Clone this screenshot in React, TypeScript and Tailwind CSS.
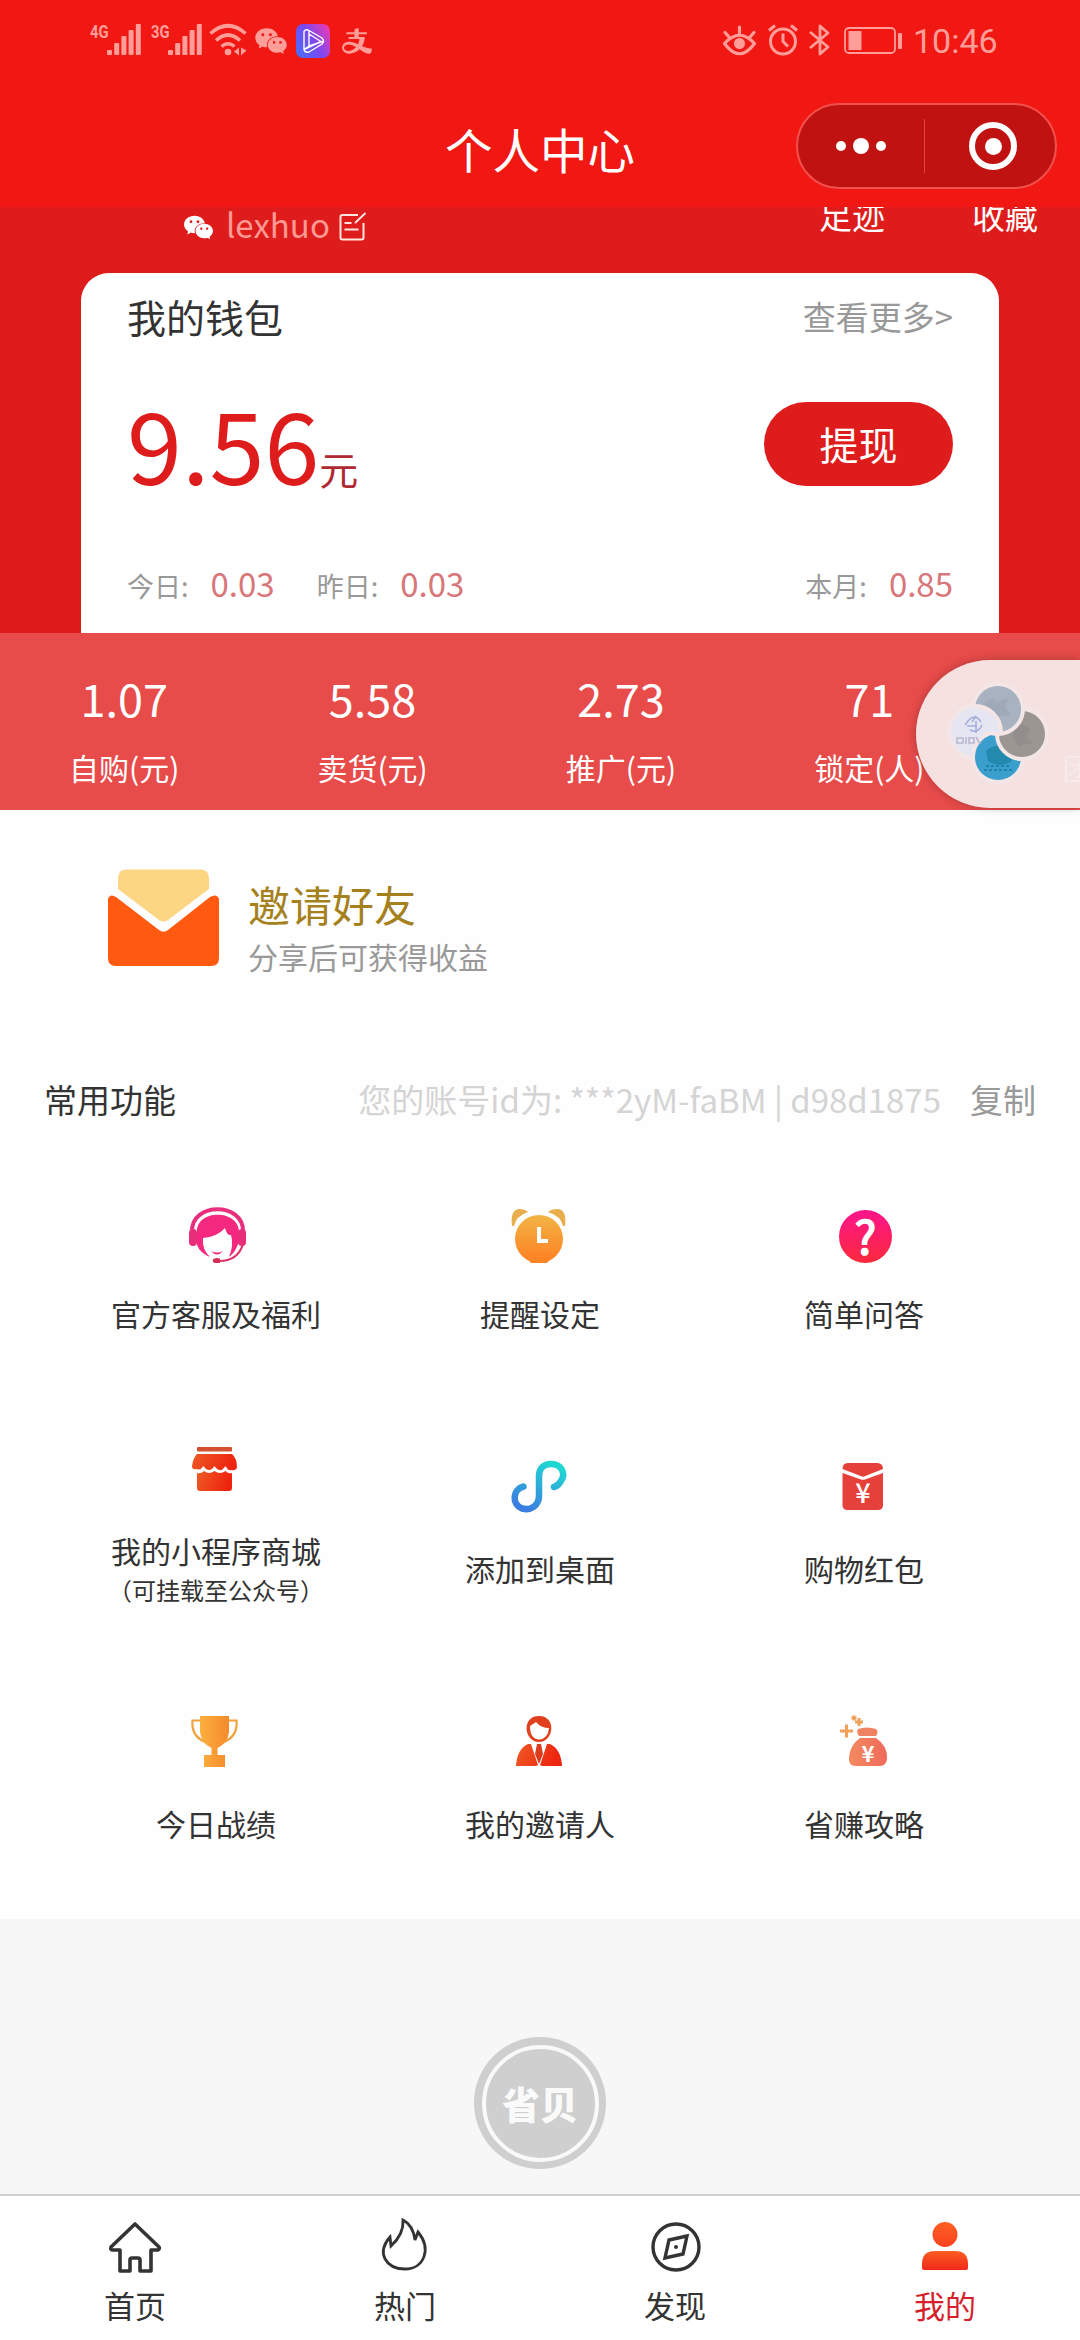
import type { ReactNode } from 'react';
import { AiFillWechat, AiOutlineAlipay } from 'react-icons/ai';

const estadisticas = [
  { valor: '1.07', etiqueta: '自购(元)' },
  { valor: '5.58', etiqueta: '卖货(元)' },
  { valor: '2.73', etiqueta: '推广(元)' },
  { valor: '71', etiqueta: '锁定(人)' },
  { valor: '', etiqueta: '团队(人)' },
];

function Signal({ label }: { label: string }) {
  return (
    <div className="flex h-[34px] w-[52px] items-start">
      <span className="w-[17px] origin-left scale-x-[0.82] font-[Roboto] text-[18px] font-bold leading-[18px]">{label}</span>
      <svg width="34" height="34" viewBox="0 0 34 34" fill="currentColor" className="shrink-0">
        <rect x="0" y="27" width="5" height="5" rx="1" />
        <rect x="7.2" y="20" width="5" height="12" rx="1" />
        <rect x="14.4" y="13" width="5" height="19" rx="1" />
        <rect x="21.6" y="7" width="5" height="25" rx="1" />
        <rect x="28.8" y="1" width="5" height="31" rx="1" />
      </svg>
    </div>
  );
}

function StatusBar() {
  return (
    <div className="flex h-[80px] items-start pl-[90px] pr-[84px] pt-[23px] text-[#ff9e99]">
      <Signal label="4G" />
      <div className="w-[9px]" />
      <Signal label="3G" />
      <svg width="38" height="34" viewBox="0 0 38 34" fill="none" stroke="currentColor" strokeWidth="3.6" className="ml-[6px]">
        <path d="M1.5 10.5Q19-5 36.5 10.5" />
        <path d="M7 17.5Q19 6.5 31 17.5" />
        <path d="M12.5 23.5Q19 18 25.5 23.5" />
        <circle cx="19" cy="29" r="3.3" fill="currentColor" stroke="none" />
        <path d="M30 24.5v8l-5-4zM32 24.5v8l5.5-5z" fill="currentColor" stroke="none" />
      </svg>
      <AiFillWechat className="ml-[6px] h-[36px] w-[36px]" />
      <svg width="34" height="34" viewBox="0 0 34 34" className="ml-[7px] mt-[1px]">
        <defs>
          <linearGradient id="video" x1="0" y1="0.8" x2="1" y2="0.2">
            <stop offset="0" stopColor="#4a6cff" />
            <stop offset="0.5" stopColor="#7a48f0" />
            <stop offset="1" stopColor="#e83bb4" />
          </linearGradient>
        </defs>
        <rect width="34" height="34" rx="7" fill="url(#video)" />
        <path d="M8 7.5Q10 4.5 13 6.5L26 14Q29 17 26 20L13 28Q9 29 8 25.5zM8 25.5L13 22V6.5M13 10L25 17.5L8 25.5M13 22L28 17" fill="none" stroke="#fff" strokeWidth="1.4" strokeLinejoin="round" />
      </svg>
      <AiOutlineAlipay className="ml-[9px] mt-[1px] h-[34px] w-[36px]" />

      <div className="ml-auto flex items-start">
        <svg width="35" height="34" viewBox="0 0 35 34" fill="none" stroke="currentColor" strokeWidth="3.2" strokeLinecap="round">
          <path d="M2.5 20.5Q17.5 4 32.5 20.5Q17.5 41 2.5 20.5z" strokeLinejoin="round" />
          <circle cx="17.5" cy="20.5" r="5.5" fill="currentColor" stroke="none" />
          <path d="M3 9.5L7 14M17.5 4v6M32 9.5L28 14" />
        </svg>
        <svg width="32" height="34" viewBox="0 0 32 34" fill="none" stroke="currentColor" strokeWidth="3" className="ml-[10px]">
          <circle cx="16" cy="18.5" r="12.5" />
          <path d="M16 10.5v8l5 5M2 7.5l6-5M24 2.5l6 5" />
        </svg>
        <svg width="24" height="34" viewBox="0 0 24 34" fill="none" stroke="currentColor" strokeWidth="2.8" className="ml-[9px]">
          <path d="M2 9l18 15-8 7V3l8 7L2 25" strokeLinejoin="round" />
        </svg>
        <svg width="60" height="34" viewBox="0 0 60 34" className="ml-[12px]">
          <rect x="1" y="5" width="50" height="25" rx="4" fill="none" stroke="currentColor" strokeWidth="1.8" />
          <rect x="4.5" y="8" width="13" height="19" fill="currentColor" />
          <rect x="54" y="10" width="4" height="16" rx="1" fill="currentColor" />
        </svg>
        <span className="ml-[9px] w-[83px] whitespace-nowrap font-[Roboto] text-[34px] leading-[36px]">10:46</span>
      </div>
    </div>
  );
}

function Header() {
  return (
    <header className="relative h-[207px] shrink-0 bg-[#f11814]">
      <StatusBar />
      <h1 className="pt-[34px] text-center text-[47.5px] leading-[70px] text-white">个人中心</h1>
      {/* Cápsula del mini programa */}
      <div className="absolute left-[796px] top-[103px] flex h-[86px] w-[261px] items-center rounded-full border-2 border-[#f2504c] bg-[#c01311]">
        <div className="flex w-[126px] items-center justify-center gap-[7px]">
          <span className="h-[10px] w-[10px] rounded-full bg-white" />
          <span className="h-[16px] w-[16px] rounded-full bg-white" />
          <span className="h-[10px] w-[10px] rounded-full bg-white" />
        </div>
        <div className="h-[54px] w-px bg-[#e0443f]" />
        <div className="ml-[44px] flex h-[48px] w-[48px] items-center justify-center rounded-full border-[6px] border-white">
          <span className="h-[17px] w-[17px] rounded-full bg-white" />
        </div>
      </div>
    </header>
  );
}

function Wallet() {
  return (
    <section className="h-[426px] shrink-0 overflow-hidden bg-[#df1c1c] px-[81px]">
      <div className="-mr-[60px] flex h-[66px] items-start text-white">
        <AiFillWechat className="ml-[101px] mt-[4px] h-[33px] w-[33px] shrink-0" />
        <span className="ml-[11px] mt-[-7px] text-[33px] leading-[48px] text-[#ff9993]">lexhuo</span>
        <svg width="28" height="30" viewBox="0 0 28 30" fill="none" stroke="#ffe3e0" strokeWidth="2" className="ml-[9px] mt-[5px] shrink-0">
          <path d="M19 3H3.5Q1.5 3 1.5 5v20.5Q1.5 27.5 3.5 27.5h19Q24.5 27.5 24.5 25.5V11M16 11L26.5 1M5.5 11h7M5.5 17.5h14" />
        </svg>
        <div className="ml-auto mr-[21px] mt-[-16px] flex gap-[87px] text-[33px] leading-[48px]">
          <span className="whitespace-nowrap">足迹</span>
          <span className="whitespace-nowrap">收藏</span>
        </div>
      </div>
      <div className="h-[360px] rounded-t-[28px] bg-white px-[46px]">
        <div className="flex items-center justify-between pt-[14px]">
          <span className="text-[39px] leading-[58px] text-[#333]">我的钱包</span>
          <span className="text-[33px] leading-[58px] text-[#999]">查看更多&gt;</span>
        </div>
        <div className="mt-[22px] flex h-[130px] items-center justify-between">
          <div className="flex items-baseline pt-[20px] text-[#df1c1c]">
            <span className="text-[99px] leading-[130px]">9.56</span>
            <span className="text-[39px] text-[#b02a33]">元</span>
          </div>
          <button className="mt-[23px] h-[84px] w-[189px] rounded-full bg-[#df1c1c] text-[39px] leading-[81px] text-white">提现</button>
        </div>
        <div className="flex items-baseline pt-[61px] text-[27px] leading-[50px] text-[#999]">
          <span>今日:</span>
          <span className="ml-[22px] text-[33px] text-[#d8777a]">0.03</span>
          <span className="ml-[42px]">昨日:</span>
          <span className="ml-[22px] text-[33px] text-[#d8777a]">0.03</span>
          <span className="ml-auto">本月:</span>
          <span className="ml-[22px] text-[33px] text-[#d8777a]">0.85</span>
        </div>
      </div>
    </section>
  );
}

function Stats() {
  return (
    <section className="relative h-[177px] shrink-0 bg-[#e74b4a]">
      <div className="flex overflow-hidden pt-[33px] text-white">
        {estadisticas.map((item) => (
          <div key={item.etiqueta} className="w-[248.4px] shrink-0 text-center">
            <div className="h-[64px] text-[45px] leading-[64px]">{item.valor}</div>
            <div className="mt-[15px] text-[30px] leading-[44px]">{item.etiqueta}</div>
          </div>
        ))}
      </div>
      {/* Ventana flotante */}
      <div className="absolute right-0 top-[27px] h-[148px] w-[164px] rounded-l-full bg-[#f4e9e8]/95 shadow-[0_0_8px_rgba(0,0,0,0.25)]">
        <svg width="164" height="148" viewBox="0 0 164 148" stroke="#f4e6e6" strokeWidth="4">
          <defs>
            <clipPath id="upper">
              <rect x="30" y="30" width="70" height="42" />
            </clipPath>
          </defs>
          <circle cx="59" cy="72" r="26" fill="#e6e6f3" />
          <circle cx="82" cy="97" r="25" fill="#3b9fce" />
          <path d="M70 91q10-10 22 0l4 10q-12 8-24 0z" fill="#2389ad" stroke="none" />
          <circle cx="106" cy="74" r="25" fill="#9c9693" />
          <path d="M97 68l8-4 9 4-3 10 6 5-14 3-6-8z" fill="#938e8b" stroke="none" />
          <circle cx="82" cy="49" r="25" fill="#a9b2c0" />
          <path d="M68 43l9-5 4 4 12-4-4 9 6 8-13 1-4 9-8-9z" fill="#a0a9b8" stroke="none" />
          <circle cx="59" cy="72" r="26" fill="#e6e6f3" clipPath="url(#upper)" />
          <g fill="none" stroke="#a3aedb" strokeWidth="1.6">
            <path d="M49 65q9-14 16-3M51 66h10M54 70q8 4 12-5M60 61v12M56 62l4-6" />
            <path d="M41 78h6v5h-6zM50 77v7M53 78h5v5h-5zM60 77l4 7" stroke="#bbb8cf" />
          </g>
          <path d="M68 110h28M70 106h25" stroke="#2380ac" strokeWidth="1.8" strokeDasharray="3 2" />
        </svg>
      </div>
    </section>
  );
}

function Invite() {
  return (
    <section className="flex shrink-0 pl-[107px] pt-[58px]">
      <svg width="113" height="99" viewBox="0 0 113 99">
        <path d="M11 10Q11 1.5 20 1.5H93Q102 1.5 102 10V21L61 52Q56.5 55 52 52L11 21z" fill="#fdd683" />
        <path d="M1 31Q3 25 9 29L52 62Q56.5 65.5 61 62L103 29Q110 25 112 31V90Q112 98 104 98H9Q1 98 1 90z" fill="#ff5a10" />
      </svg>
      <div className="pl-[28px] pt-[7px]">
        <h2 className="text-[42px] leading-[58px] text-[#a5811e]">邀请好友</h2>
        <p className="text-[30px] leading-[46px] text-[#999]">分享后可获得收益</p>
      </div>
    </section>
  );
}

function Icon({ children }: { children: ReactNode }) {
  return (
    <svg width="60" height="60" viewBox="0 0 60 60" className="overflow-visible">
      {children}
    </svg>
  );
}

const funciones = [
  {
    nombre: '官方客服及福利',
    icono: (
      <Icon>
        <path d="M6 30C6 1 57 1 57 30" fill="none" stroke="#e82e7c" strokeWidth="4" />
        <path d="M11 31C10 8 53 8 53 31L53 40Q50 51 43 56Q48 44 45 34Q41 35 39 27Q31 36 17 37Q16 49 24 56Q14 52 11 44z" fill="#f4287e" />
        <rect x="3" y="28" width="8" height="17" rx="4" fill="#e92e79" />
        <rect x="52" y="28" width="8" height="17" rx="4" fill="#e92e79" />
        <path d="M25 50Q31 53 37 50Q31 57 25 50z" fill="#f4287e" />
        <path d="M57 43Q52 60 33 60" fill="none" stroke="#e0326a" strokeWidth="2.2" />
        <path d="M27 58.5Q29 56 34 57.5V62H29Q26 61 27 58.5z" fill="#d92c55" />
      </Icon>
    ),
  },
  {
    nombre: '提醒设定',
    icono: (
      <Icon>
        <path d="M2 25Q0 9 9 8Q15 8 18 11Q6 15 4 25zM55 25Q57 9 48 8Q41 8 38 11Q51 15 53 25z" fill="#e8ae4b" />
        <circle cx="29" cy="38" r="24" fill="url(#naranja)" />
        <path d="M18 58h22l-3 4H21z" fill="#ff8426" />
        <path d="M29 26v14h9" fill="none" stroke="#fff" strokeWidth="4" />
      </Icon>
    ),
  },
  {
    nombre: '简单问答',
    icono: (
      <Icon>
        <circle cx="31.5" cy="35.5" r="26.5" fill="url(#rosa)" />
        <text x="31.5" y="53" textAnchor="middle" fontSize="46" fontWeight="400" fill="#fff" stroke="#fff" strokeWidth="1.6" fontFamily="Noto Sans CJK SC, sans-serif">?</text>
      </Icon>
    ),
  },
  {
    nombre: '我的小程序商城',
    nota: '（可挂载至公众号）',
    icono: (
      <Icon>
        <rect x="11" y="9" width="35" height="4.5" rx="1" fill="#d4512f" />
        <path d="M11 16H46Q51 20 51 30Q49 33 45 32Q42 33 39.5 28Q36 33 34 32Q31 32 28.5 28Q26 32 23 32Q20 32 17.5 28Q14 33 11 31Q6 32 6 28Q7 20 11 16z" fill="url(#tienda)" />
        <path d="M11 35Q15 36 18 33Q23 37 28.5 33Q34 37 39.5 33Q42 36 46 35V50Q46 53 43 53H14Q11 53 11 50z" fill="url(#tienda)" />
      </Icon>
    ),
  },
  {
    nombre: '添加到桌面',
    icono: (
      <Icon>
        <path d="M13.5 30.5C3 33 1 48 12 52.5C21 55 29 49 29 40V20C29 12 34 8 41 8C52 8 56 18 51 25Q48 30 44 31" fill="none" stroke="url(#enlace)" strokeWidth="6.5" strokeLinecap="round" />
      </Icon>
    ),
  },
  {
    nombre: '购物红包',
    icono: (
      <Icon>
        <path d="M8.5 13Q8.5 7 14 7H43Q49 7 49 13L30 20.5Q29 21 28 20.5z" fill="#e5403a" />
        <path d="M8.5 17L27 23.5Q29 24 31 23.5L49 17V49Q49 54 44 54H13.5Q8.5 54 8.5 49z" fill="#e5403a" />
        <text x="29" y="47" textAnchor="middle" fontSize="27" fontWeight="500" fill="#fff" fontFamily="Noto Sans CJK SC, sans-serif">¥</text>
      </Icon>
    ),
  },
  {
    nombre: '今日战绩',
    icono: (
      <Icon>
        <path d="M15 9.5H6.5Q5 25 19 31M42 9.5H50.5Q52 25 38 31" fill="none" stroke="#f0a33c" strokeWidth="2.2" />
        <path d="M14 5H43V21Q42 32 31.5 37V44H39V56H18V44H25.5V37Q15 32 14 21z" fill="url(#copa)" />
      </Icon>
    ),
  },
  {
    nombre: '我的邀请人',
    icono: (
      <Icon>
        <path fillRule="evenodd" d="M29 5C11 5 14 31 29 31S47 5 29 5zM20 15L26 11Q31 17 39 17Q38 28 29 28.5Q20 28 20 15z" fill="#e0401e" />
        <path d="M6 55Q7 38 18 33H21L28 54L26 55zM52 55Q51 38 40 33H37L30 54L32 55z" fill="url(#tienda)" />
        <path d="M27 33h4l2 10-4 10-4-10z" fill="#d93d1e" />
      </Icon>
    ),
  },
  {
    nombre: '省赚攻略',
    icono: (
      <Icon>
        <path d="M6 20h13M12.5 13.5v13M21 11h8M25 7v8M17.5 7h5M20 4.5v5" stroke="#f0a05a" strokeWidth="3" />
        <path d="M24 18Q33 15 42 18Q45 20 42 25H25Q22 21 24 18z" fill="#ef8262" />
        <path d="M26 27H42Q54 35 53 48Q52 55 46 55H22Q14 55 15 46Q16 34 26 27z" fill="url(#bolsa)" />
        <text x="34" y="50.5" textAnchor="middle" fontSize="22" fontWeight="700" fill="#fff" fontFamily="Noto Sans CJK SC, sans-serif">¥</text>
      </Icon>
    ),
  },
];

function Gradients() {
  return (
    <svg width="0" height="0" className="absolute">
      <defs>
        <linearGradient id="naranja" x1="0" y1="0" x2="0" y2="1">
          <stop offset="0" stopColor="#f2b445" />
          <stop offset="1" stopColor="#ff7f22" />
        </linearGradient>
        <linearGradient id="rosa" x1="0" y1="0" x2="0" y2="1">
          <stop offset="0" stopColor="#fc148c" />
          <stop offset="1" stopColor="#fb2a3c" />
        </linearGradient>
        <linearGradient id="tienda" x1="0" y1="0" x2="1" y2="0.2">
          <stop offset="0" stopColor="#ee5a24" />
          <stop offset="1" stopColor="#ee2410" />
        </linearGradient>
        <linearGradient id="enlace" x1="0.8" y1="0" x2="0.3" y2="1">
          <stop offset="0" stopColor="#20d8d2" />
          <stop offset="1" stopColor="#3a7fe0" />
        </linearGradient>
        <linearGradient id="copa" x1="0" y1="0" x2="1" y2="0">
          <stop offset="0" stopColor="#fbaf3e" />
          <stop offset="1" stopColor="#f58a2c" />
        </linearGradient>
        <linearGradient id="bolsa" x1="0" y1="0" x2="1" y2="0">
          <stop offset="0" stopColor="#f38a5e" />
          <stop offset="1" stopColor="#f0695c" />
        </linearGradient>
        <linearGradient id="persona" gradientUnits="userSpaceOnUse" x1="0" y1="0" x2="0" y2="52">
          <stop offset="0" stopColor="#ff6324" />
          <stop offset="0.5" stopColor="#f8431f" />
          <stop offset="0.6" stopColor="#fb5c22" />
          <stop offset="1" stopColor="#f0241a" />
        </linearGradient>
      </defs>
    </svg>
  );
}

function Functions() {
  return (
    <section className="px-[44px] pt-[96px]">
      <div className="flex h-[48px] items-center text-[33px] leading-[48px]">
        <h3 className="text-[#333]">常用功能</h3>
        <span className="ml-auto whitespace-pre text-[#d4d4d4]">您的账号id为: ***2yM-faBM | d98d1875</span>
        <span className="ml-[29px] text-[#999]">复制</span>
      </div>
      <div className="mx-[10px] mt-[18px] grid auto-rows-[255px] grid-cols-3">
        {funciones.map((item) => (
          <div key={item.nombre} className="flex flex-col items-center justify-center">
            {item.icono}
            <span className="mt-[30px] text-[30px] leading-[45px] text-[#333]">{item.nombre}</span>
            {item.nota && <span className="mb-[3px] text-[24px] leading-[33px] text-[#333]">{item.nota}</span>}
          </div>
        ))}
      </div>
    </section>
  );
}

const pestanas = [
  {
    nombre: '首页',
    icono: (
      <path d="M26 4L2 27Q1 30 4 30H11V51H21V40Q21 38 23 38H29Q31 38 31 40V51H42V30H49Q51 29 50 27z" fill="none" stroke="#333" strokeWidth="3.6" strokeLinejoin="round" />
    ),
  },
  {
    nombre: '热门',
    icono: (
      <path d="M24 0Q25 14 12 26L11 17C-3 33 7 49 26 49C45 49 53 29 39 12L36 20Q34 5 24 0z" fill="none" stroke="#333" strokeWidth="2.8" />
    ),
  },
  {
    nombre: '发现',
    icono: (
      <g fill="none" stroke="#333" strokeWidth="3.4">
        <circle cx="27" cy="27" r="23" />
        <path d="M38 16L20 20L16 38L34 34z" />
        <circle cx="27" cy="27" r="2" fill="#333" stroke="none" />
      </g>
    ),
  },
  {
    nombre: '我的',
    activa: true,
    icono: (
      <g fill="url(#persona)">
        <circle cx="26" cy="14.5" r="12.5" />
        <path d="M3 44Q3 31 16 31H36Q49 31 49 44V48Q49 50 47 50H5Q3 50 3 48z" />
      </g>
    ),
  },
];

function TabBar() {
  return (
    <nav className="flex h-[146px] shrink-0 border-t-2 border-[#cfcfcf] bg-white">
      {pestanas.map((tab) => (
        <div key={tab.nombre} className="flex flex-1 flex-col items-center pt-[24px]">
          <svg width="52" height="54" viewBox="0 0 52 54" className="overflow-visible">
            {tab.icono}
          </svg>
          <span className={tab.activa ? 'mt-[8px] text-[31px] leading-[46px] text-[#d61f2c]' : 'mt-[8px] text-[31px] leading-[46px] text-[#333]'}>
            {tab.nombre}
          </span>
        </div>
      ))}
    </nav>
  );
}

export default function App() {
  return (
    <div className="flex h-[2340px] w-[1080px] flex-col overflow-hidden bg-[#f7f7f7] font-['Noto_Sans_CJK_SC',sans-serif]">
      <Gradients />
      <Header />
      <Wallet />
      <Stats />
      <main className="h-[1109px] shrink-0 bg-[#fefefe]">
        <Invite />
        <Functions />
      </main>
      <div className="flex flex-1 justify-center pt-[118px]">
        <div className="flex h-[132px] w-[132px] items-center justify-center rounded-full bg-[#cfcfcf]">
          <div className="flex h-[117px] w-[117px] items-center justify-center rounded-full border-4 border-[#f9f9f9] text-[38px] font-black leading-none text-[#fafafa]">
            省贝
          </div>
        </div>
      </div>
      <TabBar />
    </div>
  );
}
